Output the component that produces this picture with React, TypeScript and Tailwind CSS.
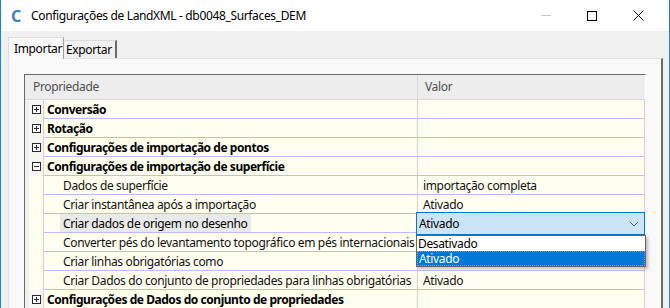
import React from "react";

type Row = {
  label: string;
  kind: "cat" | "sub";
  open?: boolean;
  value?: string;
  selected?: boolean;
};

const rows: Row[] = [
  { label: "Conversão", kind: "cat" },
  { label: "Rotação", kind: "cat" },
  { label: "Configurações de importação de pontos", kind: "cat" },
  { label: "Configurações de importação de superfície", kind: "cat", open: true },
  { label: "Dados de superfície", kind: "sub", value: "importação completa" },
  { label: "Criar instantânea após a importação", kind: "sub", value: "Ativado" },
  { label: "Criar dados de origem no desenho", kind: "sub", selected: true },
  { label: "Converter pés do levantamento topográfico em pés internacionais", kind: "sub" },
  { label: "Criar linhas obrigatórias como", kind: "sub" },
  { label: "Criar Dados do conjunto de propriedades para linhas obrigatórias", kind: "sub", value: "Ativado" },
  { label: "Configurações de Dados do conjunto de propriedades", kind: "cat" },
];

const Expander = ({ open }: { open?: boolean }) => (
  <svg width="9" height="9" viewBox="0 0 9 9">
    <rect x="0.5" y="0.5" width="8" height="8" fill="#fff" stroke="#2b2b2b" />
    <line x1="2" y1="4.5" x2="7" y2="4.5" stroke="#2b2b2b" />
    {!open && <line x1="4.5" y1="2" x2="4.5" y2="7" stroke="#2b2b2b" />}
  </svg>
);

const ComboEditor = () => (
  <>
    <div className="absolute left-[-2px] top-[-2px] z-10 flex h-[23px] w-[229px] items-center justify-between border border-[#0078d7] bg-[#cce4f7] pl-[2px] pr-[5px] text-black">
      <span>Ativado</span>
      <svg width="10" height="6" viewBox="0 0 10 6">
        <polyline points="1,1 5,5 9,1" fill="none" stroke="#5a5a5a" strokeWidth="1" />
      </svg>
    </div>
    <div className="absolute left-[-2px] top-[21px] z-20 flex w-[230px] flex-col border border-[#646464] bg-white shadow-[2px_2px_3px_rgba(0,0,0,0.25)]">
      <div className="flex h-[15px] items-center pl-[1px] leading-none text-black">Desativado</div>
      <div className="flex h-[15px] items-center border border-dotted border-[#e08a3a] bg-[#0078d7] pl-[1px] leading-none text-white">
        Ativado
      </div>
    </div>
  </>
);

const GridRow = ({ row }: { row: Row }) => {
  const isCat = row.kind === "cat";
  return (
    <div className="flex h-[19px]">
      <div className="w-[4px] bg-[#f0f0f0]" />
      <div className={`flex w-[14px] items-center justify-center ${isCat ? "bg-[#f6f6f2]" : "bg-[#fffff0]"}`}>
        {isCat && <Expander open={row.open} />}
      </div>
      <div className="flex h-full w-[374px] items-center overflow-hidden whitespace-nowrap border-b border-l border-b-[#bcbcff] border-l-[#fbc2cb] bg-[#fffff0]">
        {isCat ? (
          <span className="pl-[3px] pt-px font-bold tracking-[-0.45px] text-black">{row.label}</span>
        ) : row.selected ? (
          <span className="ml-[16px] flex h-full items-center bg-[#e9e9e9] px-[3px] pt-px text-black">{row.label}</span>
        ) : (
          <span className="pl-[19px] pt-px text-[#111]">{row.label}</span>
        )}
      </div>
      <div className="relative flex h-full flex-1 items-center whitespace-nowrap border-b border-l border-r border-b-[#bcbcff] border-l-[#fbc2cb] border-r-[#fbc2cb] bg-[#fffff0] pl-[5px] pt-px text-[#111]">
        {row.value}
        {row.selected && <ComboEditor />}
      </div>
    </div>
  );
};

export default function App() {
  return (
    <div className="flex h-[308px] w-[670px] flex-col overflow-hidden border-x border-[#1883d7] bg-[#f0f0f0] font-['Segoe_UI','Noto_Sans',sans-serif] text-[12px] leading-none tracking-[-0.35px] text-black">
      {/* title bar */}
      <div className="flex h-[31px] shrink-0 items-center bg-white">
        <span className="ml-[10px] w-[13px] text-[16px] font-bold text-[#3c7fc4]">C</span>
        <span className="ml-[7px]">Configurações de LandXML - db0048_Surfaces_DEM</span>
        <div className="ml-auto flex items-center">
          <div className="flex w-[46px] justify-center">
            <div className="h-px w-[10px] bg-[#c8c8c8]" />
          </div>
          <div className="flex w-[46px] justify-center">
            <div className="h-[10px] w-[10px] border border-black" />
          </div>
          <div className="flex w-[46px] justify-center">
            <svg width="11" height="11" viewBox="0 0 11 11">
              <path d="M0.5 0.5 L10.5 10.5 M10.5 0.5 L0.5 10.5" stroke="#000" strokeWidth="1" />
            </svg>
          </div>
          <div className="w-[8px]" />
        </div>
      </div>

      {/* tabs */}
      <div className="flex h-[27px] shrink-0 items-end pl-[7px]">
        <div className="relative z-10 mb-[-1px] flex h-[22px] w-[56px] items-center border-l border-r border-t border-l-[#dcdcdc] border-r-[#a0a0a0] border-t-[#dcdcdc] bg-[#f9f9f9] pl-[5px]">
          Importar
        </div>
        <div className="flex h-[18px] w-[53px] items-center border-r-2 border-t border-r-[#6a6a6a] border-t-[#dcdcdc] pl-[2px]">
          Exportar
        </div>
      </div>

      {/* tab panel */}
      <div className="ml-[7px] w-[655px] flex-1 border-l border-r-2 border-t border-l-[#e3e3e3] border-r-[#6a6a6a] border-t-[#e3e3e3] bg-[#f9f9f9] pl-[15px] pt-[15px]">
        <div className="w-[622px] border-l border-r border-t border-l-[#696969] border-r-white border-t-[#696969]">
          <div className="flex h-[25px] border-b border-[#d9d9d9] bg-[#ededed] text-[#4f4f4f]">
            <div className="flex w-[392px] items-center pl-[8px]">Propriedade</div>
            <div className="flex flex-1 items-center border-l border-[#d9d9d9] pl-[7px]">Valor</div>
          </div>
          {rows.map((r) => (
            <GridRow key={r.label} row={r} />
          ))}
        </div>
      </div>
    </div>
  );
}
